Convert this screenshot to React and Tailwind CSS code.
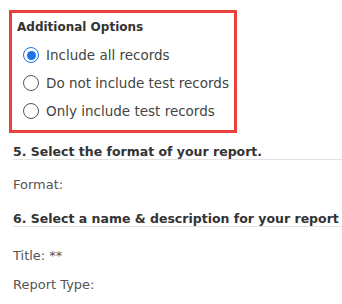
import React from 'react';

const font = { fontFamily: '"DejaVu Sans", Verdana, sans-serif' };

const Radio = ({ checked, label }) => (
    <label className="flex items-center h-[28px] ml-[6px]">
        <span
            className={
                checked
                    ? 'w-[16px] h-[16px] rounded-full border-[1.5px] border-[#1a73e8] flex items-center justify-center bg-white'
                    : 'w-[16px] h-[16px] rounded-full border border-[#555] bg-white'
            }
        >
            {checked && <span className="w-[9px] h-[9px] rounded-full bg-[#1a73e8]" />}
        </span>
        <span className="ml-[7px] text-[13.5px] text-[#444]">{label}</span>
    </label>
);

const Heading = ({ children }) => (
    <div className="border-b border-[#e2e2e2] whitespace-nowrap text-[12.5px] leading-[15px] font-bold text-[#333]">
        {children}
    </div>
);

export default function App() {
    return (
        <div className="w-[342px] h-[304px] overflow-hidden bg-white" style={font}>
            {/* Additional Options box */}
            <div className="ml-[9px] mt-[10px] w-[228px] h-[123px] border-[3px] border-[#e8403a] pl-[5px] pt-[5px]">
                <div className="text-[12px] font-bold text-[#333] leading-[18px]">Additional Options</div>
                <div className="mt-[5px]">
                    <Radio checked label="Include all records" />
                    <Radio label="Do not include test records" />
                    <Radio label="Only include test records" />
                </div>
            </div>

            {/* Report format / name sections */}
            <div className="pl-[13px] mt-[11px]">
                <Heading>5. Select the format of your report.</Heading>
                <div className="mt-[15px] text-[13px] text-[#555]">Format:</div>
                <div className="mt-[16px]">
                    <Heading>6. Select a name &amp; description for your report for</Heading>
                </div>
                <div className="mt-[19px] text-[13px] text-[#555]">Title: **</div>
                <div className="mt-[10px] text-[13px] text-[#555]">Report Type:</div>
            </div>
        </div>
    );
}
